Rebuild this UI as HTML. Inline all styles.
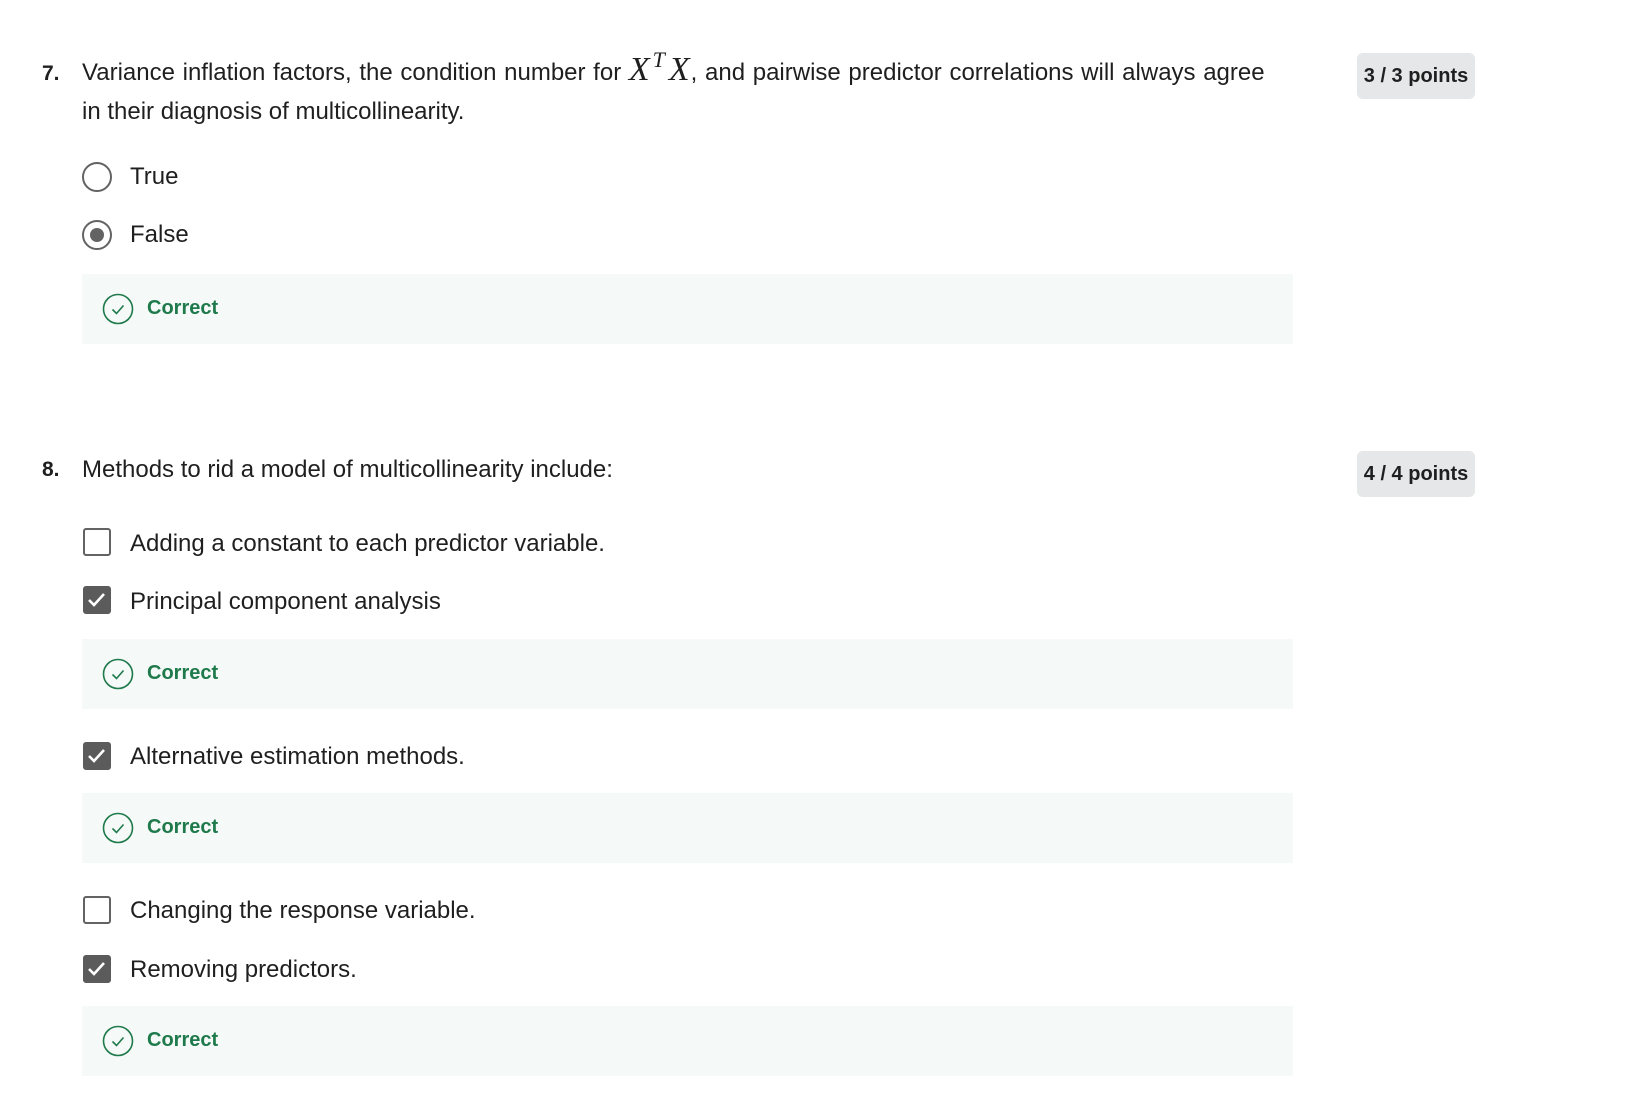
<!DOCTYPE html>
<html><head><meta charset="utf-8"><style>
body{margin:0;width:1645px;height:1114px;background:#fff;font-family:"Liberation Sans",sans-serif;color:#1f1f1f;position:relative;overflow:hidden}
.a{position:absolute;white-space:nowrap;font-size:24px;line-height:28px}
.num{font-weight:bold;font-size:21px}
.badge{position:absolute;left:1357px;width:118px;height:46px;background:#e5e7e8;border-radius:6px;font-weight:bold;font-size:20px;line-height:46px;text-align:center;color:#1f1f1f}
.box{position:absolute;left:82px;width:1211px;height:70px;background:#f5f9f8}
.box svg{position:absolute;left:20px;top:19px}
.box span{position:absolute;left:65px;top:23px;font-weight:bold;font-size:20px;color:#1f7a4b}
.radio{position:absolute;left:82px;width:30px;height:30px;border:2.5px solid #636363;border-radius:50%;box-sizing:border-box}
.cb{position:absolute;left:83px;width:28px;height:28px;border:2.5px solid #636363;border-radius:3px;box-sizing:border-box}
.cb.on{background:#5b5b5b;border-color:#5b5b5b}
.m{font-family:'Liberation Serif',serif;font-style:italic;font-size:34px;line-height:0;letter-spacing:1px}
.m .s{font-size:22px;position:relative;top:-13px;margin:0 3px 0 2px}
</style></head><body>
<div class="a num" style="left:42px;top:60px">7.</div>
<div class="a" style="left:82px;top:59px;word-spacing:1px">Variance inflation factors, the condition number for <span class="m">X<span class="s">T</span>X</span>, and pairwise predictor correlations will always agree</div>
<div class="a" style="left:82px;top:98px">in their diagnosis of multicollinearity.</div>
<div class="badge" style="top:53px">3 / 3 points</div>
<div class="radio" style="top:162px"></div>
<div class="a" style="left:130px;top:163px">True</div>
<div class="radio" style="top:220px"><div style="position:absolute;left:5.5px;top:5.5px;width:14px;height:14px;border-radius:50%;background:#636363"></div></div>
<div class="a" style="left:130px;top:221px">False</div>
<div class="box" style="top:274px"><svg width="32" height="32" viewBox="0 0 32 32"><circle cx="16" cy="16" r="14.5" fill="none" stroke="#1f7a4b" stroke-width="1.6"/><path d="M10.5 16.5l4 4 7-8" fill="none" stroke="#1f7a4b" stroke-width="1.6"/></svg><span>Correct</span></div>

<div class="a num" style="left:42px;top:456px">8.</div>
<div class="a" style="left:82px;top:456px">Methods to rid a model of multicollinearity include:</div>
<div class="badge" style="top:451px">4 / 4 points</div>

<div class="cb" style="top:528px"></div>
<div class="a" style="left:130px;top:530px">Adding a constant to each predictor variable.</div>
<div class="cb on" style="top:586px"><svg width="24" height="24" viewBox="0 0 24 24" style="position:absolute;left:0;top:0"><path d="M4 12l5 5 10-11" fill="none" stroke="#fff" stroke-width="2.6"/></svg></div>
<div class="a" style="left:130px;top:588px">Principal component analysis</div>
<div class="box" style="top:639px"><svg width="32" height="32" viewBox="0 0 32 32"><circle cx="16" cy="16" r="14.5" fill="none" stroke="#1f7a4b" stroke-width="1.6"/><path d="M10.5 16.5l4 4 7-8" fill="none" stroke="#1f7a4b" stroke-width="1.6"/></svg><span>Correct</span></div>
<div class="cb on" style="top:742px"><svg width="24" height="24" viewBox="0 0 24 24" style="position:absolute;left:0;top:0"><path d="M4 12l5 5 10-11" fill="none" stroke="#fff" stroke-width="2.6"/></svg></div>
<div class="a" style="left:130px;top:743px">Alternative estimation methods.</div>
<div class="box" style="top:793px"><svg width="32" height="32" viewBox="0 0 32 32"><circle cx="16" cy="16" r="14.5" fill="none" stroke="#1f7a4b" stroke-width="1.6"/><path d="M10.5 16.5l4 4 7-8" fill="none" stroke="#1f7a4b" stroke-width="1.6"/></svg><span>Correct</span></div>
<div class="cb" style="top:896px"></div>
<div class="a" style="left:130px;top:897px">Changing the response variable.</div>
<div class="cb on" style="top:955px"><svg width="24" height="24" viewBox="0 0 24 24" style="position:absolute;left:0;top:0"><path d="M4 12l5 5 10-11" fill="none" stroke="#fff" stroke-width="2.6"/></svg></div>
<div class="a" style="left:130px;top:956px">Removing predictors.</div>
<div class="box" style="top:1006px"><svg width="32" height="32" viewBox="0 0 32 32"><circle cx="16" cy="16" r="14.5" fill="none" stroke="#1f7a4b" stroke-width="1.6"/><path d="M10.5 16.5l4 4 7-8" fill="none" stroke="#1f7a4b" stroke-width="1.6"/></svg><span>Correct</span></div>
</body></html>
